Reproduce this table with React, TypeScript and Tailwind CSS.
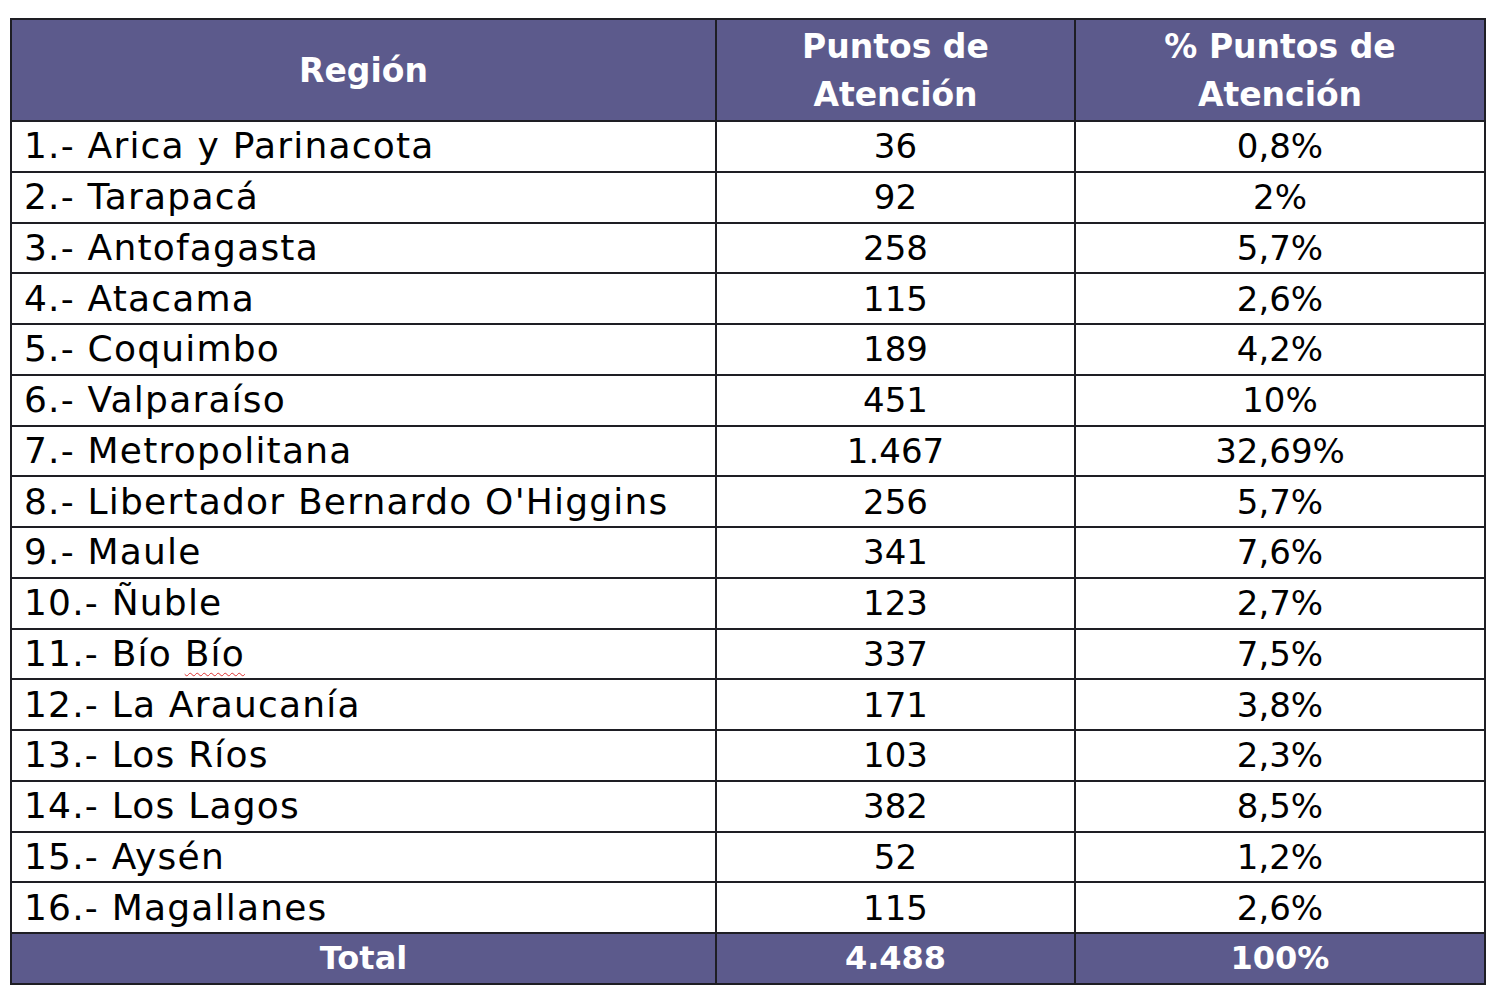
import React from "react";

const rows = [
  ["1.- Arica y Parinacota", "36", "0,8%"],
  ["2.- Tarapacá", "92", "2%"],
  ["3.- Antofagasta", "258", "5,7%"],
  ["4.- Atacama", "115", "2,6%"],
  ["5.- Coquimbo", "189", "4,2%"],
  ["6.- Valparaíso", "451", "10%"],
  ["7.- Metropolitana", "1.467", "32,69%"],
  ["8.- Libertador Bernardo O'Higgins", "256", "5,7%"],
  ["9.- Maule", "341", "7,6%"],
  ["10.- Ñuble", "123", "2,7%"],
  ["11.- Bío Bío", "337", "7,5%"],
  ["12.- La Araucanía", "171", "3,8%"],
  ["13.- Los Ríos", "103", "2,3%"],
  ["14.- Los Lagos", "382", "8,5%"],
  ["15.- Aysén", "52", "1,2%"],
  ["16.- Magallanes", "115", "2,6%"],
];

const cell = "border-2 border-[#1e1e24]";

export default function App() {
  return (
    <div className="min-h-screen w-full bg-white pt-[18px] pl-[10px] font-['DejaVu_Sans',sans-serif]">
      <table className="w-[1474px] table-fixed border-collapse text-black">
        <colgroup>
          <col className="w-[705px]" />
          <col className="w-[359px]" />
          <col className="w-[410px]" />
        </colgroup>
        <thead>
          <tr className="h-[102px] bg-[#5c5a8c] text-white font-bold text-[33px] leading-[48px]">
            <th className={`${cell} pt-[2px]`}>Región</th>
            <th className={`${cell} pt-[2px]`}>Puntos de<br />Atención</th>
            <th className={`${cell} pt-[2px]`}>% Puntos de<br />Atención</th>
          </tr>
        </thead>
        <tbody className="text-[34px] leading-none">
          {rows.map(([region, puntos, pct]) => (
            <tr key={region} className="h-[50.75px]">
              <td className={`${cell} pl-[12px] whitespace-nowrap text-[36px] tracking-[1.2px]`}>
                {region === "11.- Bío Bío" ? (
                  <>
                    11.- Bío{" "}
                    <span className="underline decoration-wavy decoration-[#d33] decoration-1 underline-offset-[6px]">Bío</span>
                  </>
                ) : (
                  region
                )}
              </td>
              <td className={`${cell} text-center`}>{puntos}</td>
              <td className={`${cell} text-center`}>{pct}</td>
            </tr>
          ))}
          <tr className="h-[50.75px] bg-[#5c5a8c] text-white font-bold text-[32px]">
            <td className={`${cell} text-center`}>Total</td>
            <td className={`${cell} text-center`}>4.488</td>
            <td className={`${cell} text-center`}>100%</td>
          </tr>
        </tbody>
      </table>
    </div>
  );
}
